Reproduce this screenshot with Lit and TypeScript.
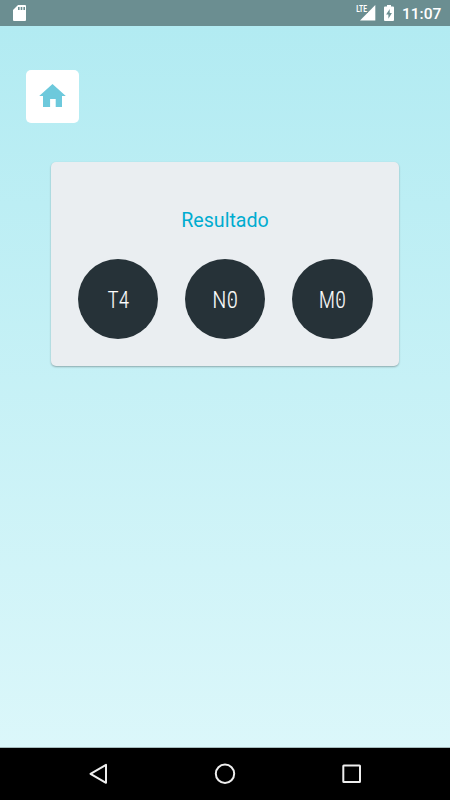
import { LitElement, html, svg, css } from "lit";
import { customElement, property } from "lit/decorators.js";

@customElement("status-bar")
class StatusBar extends LitElement {
  static styles = css`
    :host { display: flex; align-items: center; height: 26px; flex: none; box-sizing: border-box;
      padding: 0 9px 0 13px; background: #6b8e91; color: #fff; }
    svg { display: block; flex: none; }
    .spacer { flex: 1; }
    .battery { margin-left: 8px; }
    .lte { font: 700 9.5px Roboto, sans-serif; }
    .time { margin-left: 8px; width: 39px; font: 500 15.5px/26px Roboto, sans-serif; padding-top: 2px; white-space: nowrap; }
  `;
  render() {
    return html`
      <svg width="14" height="26" viewBox="0 0 14 26">
        <path fill="#fff" d="M5 5h7q1 0 1 1v14q0 1-1 1H1q-1 0-1-1V10z"/>
        <path fill="#6b8e91" d="M5 7h1.6v3H5zM7.7 7h1.6v3H7.7zM10.4 7H12v3h-1.6z"/>
      </svg>
      <span class="spacer"></span>
      <svg width="20" height="26" viewBox="0 0 20 26">
        <path fill="#fff" d="M19.3 5v15.6H4z"/>
        <path fill="#6b8e91" d="M0 4h12v9H0z"/>
        <text class="lte" x="0.2" y="12.3" fill="#fff" textLength="10.8" lengthAdjust="spacingAndGlyphs">LTE</text>
      </svg>
      <svg class="battery" width="10" height="26" viewBox="0 0 10 26">
        <path fill="#fff" d="M3 5h4v1.5h2q1 0 1 1V20q0 1-1 1H1q-1 0-1-1V7.5q0-1 1-1h2z"/>
        <path fill="#6b8e91" d="M5.700 9v4h2.200L4.400 18.700v-4.200H2.100z"/>
      </svg>
      <span class="time">11:07</span>`;
  }
}

@customElement("result-badge")
class ResultBadge extends LitElement {
  @property() label = "";
  @property({ type: Number }) start = 0;
  @property({ type: Number }) span = 0;
  static styles = css`
    :host { display: block; width: 80.5px; height: 80.5px; border-radius: 50%; background: #263238; }
    svg { display: block; }
    text { font: 300 24px Roboto, sans-serif; letter-spacing: 1px; fill: #fff; stroke: #fff; stroke-width: .2px; }
  `;
  render() {
    return html`<svg width="80" height="80" viewBox="0 0 80 80">
      <text x=${this.start} y="49" textLength=${this.span} lengthAdjust="spacingAndGlyphs">${this.label}</text>
      ${this.label.endsWith("0") ? svg`<circle cx=${this.start + this.span - 6.6} cy="40.5" r=".9" fill="#fff"/>` : ""}
    </svg>`;
  }
}

@customElement("nav-bar")
class NavBar extends LitElement {
  static styles = css`
    :host { display: flex; justify-content: space-between; height: 52px; flex: none; box-sizing: border-box;
      padding: 0 86px; background: #000; }
    svg { display: block; fill: none; stroke: #eee; stroke-width: 2; }
  `;
  render() {
    return html`
      <svg width="24" height="52" viewBox="86 748 24 52"><path stroke-linejoin="round" d="M106 764.800v18L90.500 773.800z"/></svg>
      <svg width="24" height="52" viewBox="213 748 24 52"><circle cx="225" cy="773.800" r="9.200"/></svg>
      <svg width="24" height="52" viewBox="340 748 24 52"><rect x="343.300" y="765.500" width="16.700" height="16.500" rx=".5"/></svg>`;
  }
}

@customElement("app-root")
class AppRoot extends LitElement {
  static styles = css`
    :host { display: flex; flex-direction: column; height: 800px; width: 450px; overflow: hidden; font-family: Roboto, sans-serif; }
    main { flex: 1; box-sizing: border-box; padding: 44px 26px 0; display: flex; flex-direction: column;
      align-items: flex-start; background: linear-gradient(#b2ebf2, #dbf7fa); border-bottom: 1px solid #a5babc; }
    .home { display: block; width: 53px; height: 52.5px; padding: 0; border: 0; border-radius: 5px; background: #fff; }
    .home svg { display: block; }
    .card { box-sizing: border-box; width: 348px; height: 203.5px; margin: 39.5px 0 0 25px; padding: 45px 26.5px 0;
      background: #eaeef1; border-radius: 5px; box-shadow: 0 1px 2px rgba(0,0,0,.3); }
    h1 { margin: 0; font: 400 19.6px/28px Roboto, sans-serif; text-align: center; color: #00acd0; }
    .row { display: flex; justify-content: space-between; margin-top: 23.5px; }
  `;
  render() {
    return html`
      <status-bar></status-bar>
      <main>
        <button class="home" aria-label="Home">
          <svg width="53" height="53" viewBox="0 0 53 53"><path fill="#6dc9dc" d="M26.500 14L39.800 26H36v11h-6.300v-8h-5.600v8H17V26h-3.800z"/></svg>
        </button>
        <section class="card">
          <h1>Resultado</h1>
          <div class="row">
            <result-badge label="T4" start="29.700" span="22"></result-badge>
            <result-badge label="N0" start="27.500" span="26"></result-badge>
            <result-badge label="M0" start="27" span="27.500"></result-badge>
          </div>
        </section>
      </main>
      <nav-bar></nav-bar>`;
  }
}
